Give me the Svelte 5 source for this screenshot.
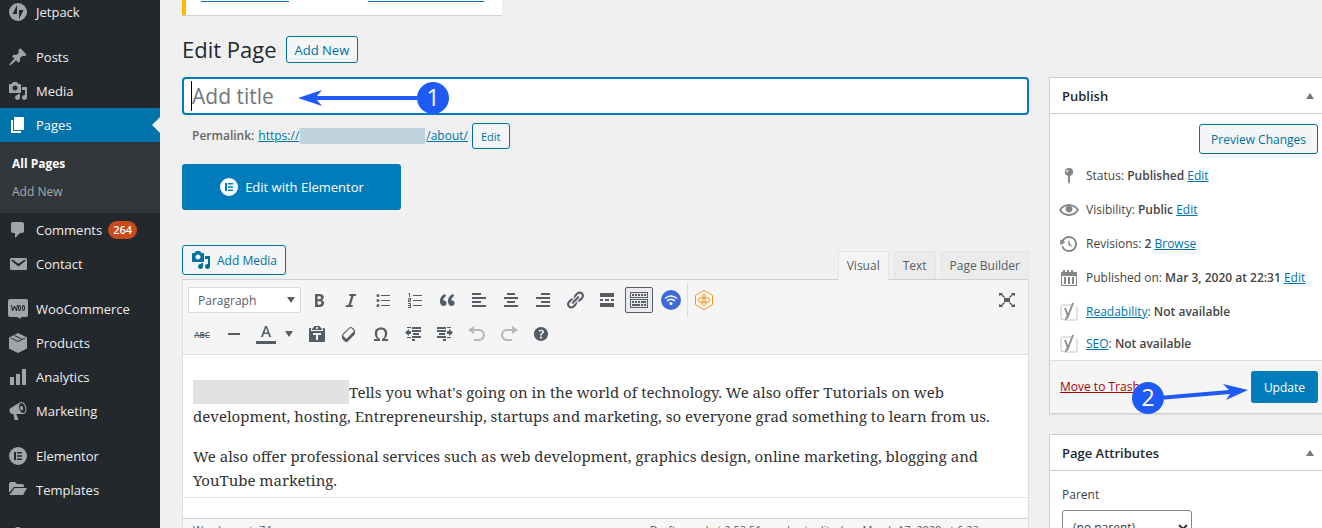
<script>
    let title = '';
    let format = 'Paragraph';
    let parentPage = '(no parent)';

    const icons = {
        jetpack: 'M10 1a9 9 0 1 0 0 18 9 9 0 0 0 0-18zM9 12H4.500L9 3zM11 17V8h4.500z',
        post: 'M10.440 3.020l1.820-1.820 6.360 6.350-1.830 1.820c-1.050-.68-2.480-.57-3.410.36l-.75.75c-.92.93-1.040 2.350-.35 3.410l-1.830 1.820-2.410-2.410-2.800 2.790c-.42.42-3.380 2.710-3.800 2.290s1.860-3.390 2.280-3.810l2.790-2.790L4.100 9.360l1.830-1.820c1.050.69 2.480.57 3.400-.36l.75-.75c.93-.92 1.050-2.350.36-3.410z',
        media: 'M13 11V4c0-.55-.45-1-1-1h-1.670L9 1H5L3.670 3H2c-.55 0-1 .45-1 1v7c0 .55.45 1 1 1h10c.55 0 1-.45 1-1zM7 4.500c1.380 0 2.500 1.120 2.500 2.500S8.380 9.500 7 9.500 4.500 8.380 4.500 7 5.620 4.500 7 4.500zM14 6h5v10.500c0 1.380-1.120 2.500-2.500 2.500S14 17.880 14 16.500s1.120-2.500 2.500-2.500c.17 0 .34.02.5.05V9h-3V6zm-4 8.050V13h2v3.500c0 1.380-1.120 2.500-2.500 2.500S7 17.880 7 16.500 8.120 14 9.500 14c.17 0 .34.02.5.05z',
        page: 'M6 15V2h10v13H6zm-1 1h8v2H3V5h2v11z',
        comment: 'M5 2h9c1.100 0 2 .9 2 2v7c0 1.100-.9 2-2 2h-2l-5 5v-5H5c-1.100 0-2-.9-2-2V4c0-1.100.9-2 2-2z',
        mail: 'M3.870 4h13.250C18.370 4 19 4.590 19 5.790v8.420c0 1.190-.63 1.790-1.880 1.790H3.870c-1.250 0-1.880-.6-1.880-1.790V5.790c0-1.200.63-1.790 1.880-1.790zm6.620 8.600l6.740-5.530c.24-.2.43-.66.13-1.070-.29-.41-.82-.42-1.170-.17l-5.700 3.860L4.800 5.830c-.35-.25-.88-.24-1.170.17-.3.41-.11.87.13 1.070z',
        woo: 'M2 0h16a2 2 0 0 1 2 2v14a2 2 0 0 1-2 2h-5v2l-4-2H2a2 2 0 0 1-2-2V2a2 2 0 0 1 2-2zM3 6l1 6h1l1.500-3.500L8 12h1l1-6H9l-.7 4L7 7H6l-1.300 3L4 6zM11.500 6a1.500 3 0 1 0 0 6 1.500 3 0 0 0 0-6zM11.500 7.300a.6 1.700 0 1 1 0 3.400.6 1.700 0 0 1 0-3.400zM15.500 6a1.500 3 0 1 0 0 6 1.500 3 0 0 0 0-6zM15.500 7.300a.6 1.700 0 1 1 0 3.400.6 1.700 0 0 1 0-3.400z',
        box: 'M10 0l9 4.500v11L10 20l-9-4.500v-11zM2.500 5.200L10 9l7.500-3.800-.8-.5L10 8 3.500 4.700zM6 2.800l7.500 3.700.8-.5L7 2.300z',
        chart: 'M18 18V2h-4v16h4zm-6 0V7H8v11h4zm-6 0v-8H2v8h4z',
        megaphone: 'M18.150 5.940c.46 1.620.38 3.220-.02 4.480-.42 1.280-1.260 2.180-2.300 2.480-.16.06-.26.06-.4.06-.06.02-.12.02-.18.02-.06.02-.14.02-.22.02h-6.800l2.220 5.500c.02.14-.06.26-.14.34-.08.1-.24.16-.34.16H6.950c-.1 0-.26-.06-.34-.16-.08-.08-.16-.2-.14-.34l-1-5.500H4.250l-.02-.02c-.5.06-1.080-.18-1.540-.62s-.88-1.080-1.060-1.880c-.24-.8-.2-1.560-.02-2.200.18-.62.58-1.080 1.060-1.300l.02-.02 9-5.400c.1-.06.18-.1.24-.16.06-.04.14-.08.24-.12.16-.08.28-.12.5-.18 1.040-.3 2.240.1 3.220.98s1.840 2.240 2.260 3.860zm-2.580 5.980h-.02c.4-.1.74-.34 1.040-.7.58-.7.86-1.760.86-3.040 0-.64-.1-1.300-.28-1.980-.34-1.360-1.020-2.500-1.780-3.240s-1.680-1.100-2.460-.88c-.82.22-1.400.96-1.700 2-.32 1.040-.28 2.360.06 3.720.38 1.360 1 2.500 1.800 3.240.78.74 1.620 1.100 2.480.88zm-2.540-7.080c.22-.04.42-.02.62.04.38.16.76.48 1.020 1s.42 1.200.42 1.780c0 .3-.04.56-.12.8-.18.48-.44.84-.86.94-.34.1-.8-.06-1.140-.4s-.64-.86-.78-1.500c-.18-.62-.12-1.240.02-1.720s.48-.84.82-.94z',
        elementor: 'M10 1a9 9 0 1 0 0 18 9 9 0 0 0 0-18zM6 6h2v8H6zM9 6h5v1.600H9zM9 9.200h5v1.600H9zM9 12.400h5V14H9z',
        folder: 'M1 4a2 2 0 0 1 2-2h4l2 2h5a2 2 0 0 1 2 2v1H6L1 13zM6.500 8H19l-4 7H1.500z',
        user: 'M10 2a4 4 0 1 1 0 8 4 4 0 0 1 0-8zM2 18c0-4 3-6 8-6s8 2 8 6z',
        bold: 'M6 4v13h4.540c1.370 0 2.460-.33 3.260-1 .8-.66 1.200-1.580 1.200-2.770 0-.84-.17-1.510-.51-2.010s-.9-.85-1.670-1.030v-.09c.57-.1 1.020-.4 1.360-.9s.51-1.130.51-1.910c0-1.140-.39-1.980-1.170-2.500C12.750 4.260 11.500 4 9.780 4H6zm2.570 5.150V6.260h1.360c.73 0 1.270.11 1.610.32.34.22.51.58.51 1.070 0 .54-.16.92-.47 1.150s-.82.35-1.510.35h-1.500zm0 2.190h1.600c1.440 0 2.160.53 2.160 1.610 0 .6-.17 1.050-.51 1.340s-.86.43-1.570.43H8.570v-3.380z',
        italic: 'M14.780 6h-2.130l-2.800 9h2.120l-.62 2H4.600l.62-2h2.140l2.800-9H8.030l.62-2h6.750z',
        bullets: 'M5 4a1.500 1.500 0 1 1 0 3 1.500 1.500 0 0 1 0-3zM5 9a1.500 1.500 0 1 1 0 3 1.500 1.500 0 0 1 0-3zM5 14a1.500 1.500 0 1 1 0 3 1.500 1.500 0 0 1 0-3zM8 5h9v1H8zM8 10h9v1H8zM8 15h9v1H8z',
        numbers: 'M4 3h1v4H4V4H3zM3 8h3v2.500H4v.7h2v.8H3V9.500h2v-.7H3zM3 13h3v5H3v-1h2v-1H3v-1h2v-1H3zM8 5h9v1H8zM8 10h9v1H8zM8 15h9v1H8z',
        quote: 'M9.490 13.220c0-.74-.2-1.380-.61-1.900-.62-.78-1.830-.88-2.530-.72-.29-1.650 1.110-3.750 2.920-4.650L7.880 4c-2.730 1.300-5.420 4.280-4.960 8.050C3.210 14.430 4.590 16 6.540 16c.85 0 1.560-.25 2.120-.75s.83-1.180.83-2.030zm8.050 0c0-.74-.2-1.380-.61-1.900-.63-.78-1.830-.88-2.530-.72-.29-1.650 1.110-3.750 2.920-4.650L15.930 4c-2.730 1.300-5.410 4.280-4.950 8.050.29 2.380 1.660 3.950 3.610 3.950.85 0 1.560-.25 2.120-.75s.83-1.180.83-2.030z',
        left: 'M3 3h9v2H3zM3 7h14v2H3zM3 11h9v2H3zM3 15h14v2H3z',
        center: 'M6 3h8v2H6zM3 7h14v2H3zM6 11h8v2H6zM3 15h14v2H3z',
        right: 'M8 3h9v2H8zM3 7h14v2H3zM8 11h9v2H8zM3 15h14v2H3z',
        link: 'M17.740 2.760c1.680 1.690 1.680 4.410 0 6.100l-1.530 1.520c-1.120 1.120-2.700 1.470-4.140 1.090l2.620-2.610.76-.77.76-.76c.84-.84.84-2.200 0-3.040-.84-.85-2.200-.85-3.040 0l-.77.76-3.380 3.380c-.37-1.440-.02-3.020 1.100-4.140l1.520-1.530c1.690-1.680 4.420-1.680 6.100 0zM8.590 13.430l5.340-5.340c.42-.42.42-1.100 0-1.520-.44-.43-1.130-.39-1.530 0l-5.330 5.340c-.42.42-.42 1.100 0 1.520.44.43 1.130.39 1.520 0zm-.76 2.290l4.140-4.150c.38 1.440.03 3.020-1.090 4.140l-1.520 1.530c-1.690 1.680-4.410 1.680-6.100 0-1.680-1.680-1.680-4.420 0-6.100l1.530-1.520c1.120-1.120 2.700-1.470 4.140-1.100l-4.140 4.150c-.85.84-.85 2.200 0 3.050.84.84 2.200.84 3.040 0z',
        more: 'M17 7V3H3v4h14zM6 11V9H3v2h3zm6 0V9H8v2h4zm5 0V9h-3v2h3zm0 6v-4H3v4h14z',
        sink: 'M19 2v6H1V2h18zm-1 5V3H2v4h16zM5 4v2H3V4h2zm3 0v2H6V4h2zm3 0v2H9V4h2zm3 0v2h-2V4h2zm3 0v2h-2V4h2zm2 5v9H1V9h18zm-1 8v-7H2v7h16zM5 11v2H3v-2h2zm3 0v2H6v-2h2zm3 0v2H9v-2h2zm6 0v2h-5v-2h5zm-6 3v2H3v-2h8zm3 0v2h-2v-2h2zm3 0v2h-2v-2h2z',
        rule: 'M4 9h12v2H4z',
        color: 'M13.230 13h1.900L11 2H9L5 13h1.880l1.070-3h4.180zm-1.530-4.540H8.510L10 3.600zM0 17h20v3H0z',
        paste: 'M12.380 2L15 5v1H5V5l2.640-3h4.740zM10 5c.55 0 1-.44 1-1 0-.55-.45-1-1-1s-1 .45-1 1c0 .56.45 1 1 1zm5.450-1H17c.55 0 1 .45 1 1v12c0 .56-.45 1-1 1H3c-.55 0-1-.44-1-1V5c0-.55.45-1 1-1h1.550L4 4.630V7h12V4.630zM14 11V9H6v2h3v5h2v-5h3z',
        eraser: 'M14.290 4.590l1.100 1.110c.41.4.61.94.61 1.470v2.120c0 .53-.2 1.070-.61 1.470l-6.630 6.630c-.4.41-.94.61-1.470.61s-1.070-.2-1.470-.61l-1.110-1.100-1.100-1.110c-.41-.4-.61-.94-.61-1.470v-2.120c0-.54.2-1.070.61-1.480l6.630-6.620c.4-.41.94-.61 1.470-.61s1.060.2 1.470.61zm-6.210 9.700l6.420-6.420c.39-.39.39-1.030 0-1.430L12.360 4.300c-.19-.19-.45-.29-.72-.29s-.52.1-.71.29l-6.420 6.420c-.39.4-.39 1.040 0 1.430l2.140 2.140c.38.38 1.040.38 1.430 0z',
        omega: 'M10 5.400c1.270 0 2.240.36 2.910 1.080.66.71 1 1.760 1 3.130 0 1.280-.23 2.370-.69 3.270-.47.89-1.270 1.520-2.220 2.120v2h6v-2h-3.690c.92-.64 1.620-1.340 2.120-2.340.49-1.010.74-2.130.74-3.350 0-1.780-.55-3.190-1.650-4.220S11.920 3.540 10 3.540s-3.430.53-4.520 1.570c-1.100 1.040-1.650 2.440-1.650 4.200 0 1.210.24 2.310.73 3.330.48 1.010 1.190 1.710 2.100 2.360H3v2h6v-2c-.98-.64-1.800-1.280-2.240-2.170-.45-.89-.67-1.960-.67-3.220 0-1.370.33-2.410 1-3.130C7.750 5.760 8.720 5.400 10 5.400z',
        outdent: 'M4 3h4v1H4zM9 3h9v2H9zM9 6h9v2H9zM10 9h6v2h-6zM9 12h9v2H9zM4 13h4v1H4zM9 15h3v2H9zM6 5v2h2v3H6v2L2 8.500z',
        indent: 'M16 3h-4v1h4zM11 3H2v2h9zM11 6H2v2h9zM10 9H4v2h6zM11 12H2v2h9zM16 13h-4v1h4zM11 15H8v2h3zM14 5v2h-2v3h2v2l4-3.500z',
        undo: 'M12 5H7V2L1 6l6 4V7h5c2.200 0 4 1.800 4 4s-1.800 4-4 4H7v2h5c3.300 0 6-2.700 6-6s-2.700-6-6-6z',
        redo: 'M8 5h5V2l6 4-6 4V7H8c-2.200 0-4 1.800-4 4s1.800 4 4 4h5v2H8c-3.300 0-6-2.700-6-6s2.700-6 6-6z',
        help: 'M17 10c0-3.870-3.140-7-7-7-3.870 0-7 3.130-7 7s3.130 7 7 7c3.860 0 7-3.130 7-7zm-6.300 1.480H9.140v-.43c0-.38.08-.7.24-.98s.46-.57.88-.89c.41-.29.68-.53.81-.71.14-.18.2-.39.2-.62 0-.25-.09-.44-.28-.58-.19-.13-.45-.19-.79-.19-.58 0-1.250.19-2 .57l-.64-1.280c.87-.49 1.800-.74 2.770-.74.81 0 1.450.2 1.920.58.48.39.71.91.71 1.550 0 .43-.09.8-.29 1.110-.19.32-.57.67-1.110 1.060-.38.28-.61.49-.71.63-.1.15-.15.34-.15.57v.35zm-1.470 2.740c-.18-.17-.27-.42-.27-.73 0-.33.08-.58.26-.75s.43-.25.77-.25c.32 0 .57.09.75.26s.27.42.27.74c0 .3-.09.55-.27.72-.18.18-.43.27-.75.27-.33 0-.58-.09-.76-.26z',
        full: 'M7 8h6v4H7zM2 3h4L5 4l3 3-1 1-3-3-2 1zM18 3h-4l1 1-3 3 1 1 3-3 2 1zM2 17h4l-1-1 3-3-1-1-3 3-2-1zM18 17h-4l1-1-3-3 1-1 3 3 2-1z',
        pin: 'M10 2a4 4 0 0 1 1 7.900V16l-1 2-1-2V9.900A4 4 0 0 1 10 2zM8.500 4A1.300 1.300 0 0 0 8 6.500l1.500-2z',
        eye: 'M19.700 9.400C17.700 6 14 3.900 10 3.900S2.300 6 .3 9.400L0 10l.3.6c2 3.400 5.700 5.500 9.700 5.500s7.700-2.100 9.700-5.500l.3-.6-.3-.6zM10 14.100c-3.100 0-6-1.600-7.700-4.100C3.600 8 5.700 6.600 8 6.100c-.9.6-1.500 1.700-1.500 2.900 0 1.900 1.600 3.500 3.500 3.500s3.500-1.600 3.500-3.500c0-1.200-.6-2.300-1.500-2.900 2.300.5 4.400 1.900 5.700 3.900-1.700 2.500-4.600 4.100-7.700 4.100z',
        backup: 'M13.650 2.880c3.930 2.010 5.480 6.840 3.470 10.770s-6.830 5.480-10.770 3.470c-1.870-.96-3.200-2.560-3.860-4.400l1.640-1.030c.45 1.570 1.520 2.950 3.080 3.760 3.010 1.540 6.690.35 8.230-2.660 1.550-3.010.36-6.690-2.650-8.240C9.780 3.010 6.100 4.200 4.560 7.210l1.880.97-4.950 3.080-.39-5.820 1.780.91C4.900 2.400 9.750.89 13.650 2.880zm-4.360 7.830C9.110 10.530 9 10.280 9 10c0-.07.03-.12.04-.19h-.01L10 5l.97 4.810L14 13l-4.500-2.120.02-.02c-.08-.04-.16-.09-.23-.15z',
        calendar: 'M2 4h2V2h2v2h2V2h2v2h2V2h2v2h4v14H2zM3 8v9h14V8zM5 9h2v7H5zM9 9h2v7H9zM13 9h2v7h-2z'
    };

    const menu = [
        { name: 'Jetpack', icon: 'jetpack' },
        { sep: true },
        { name: 'Posts', icon: 'post' },
        { name: 'Media', icon: 'media' },
        { name: 'Pages', icon: 'page', sub: ['All Pages', 'Add New'] },
        { name: 'Comments', icon: 'comment', count: 264 },
        { name: 'Contact', icon: 'mail' },
        { sep: true },
        { name: 'WooCommerce', icon: 'woo' },
        { name: 'Products', icon: 'box' },
        { name: 'Analytics', icon: 'chart' },
        { name: 'Marketing', icon: 'megaphone' },
        { sep: true },
        { name: 'Elementor', icon: 'elementor' },
        { name: 'Templates', icon: 'folder' },
        { sep: true },
        { name: '', icon: 'user' }
    ];

    const row1 = ['bold', 'italic', 'bullets', 'numbers', 'quote', 'left', 'center', 'right', 'link', 'more', 'sink'];
    const row2 = ['paste', 'eraser', 'omega', 'outdent', 'indent', 'undo', 'redo', 'help'];

    const details = [
        { icon: 'pin', label: 'Status:', value: 'Published', action: 'Edit' },
        { icon: 'eye', label: 'Visibility:', value: 'Public', action: 'Edit' },
        { icon: 'backup', label: 'Revisions:', value: '2', action: 'Browse' },
        { icon: 'calendar', label: 'Published on:', value: 'Mar 3, 2020 at 22:31', action: 'Edit' }
    ];
</script>

{#snippet icon(name)}
    <svg class="icon" viewBox="0 0 20 20" aria-hidden="true"><path fill-rule="evenodd" d={icons[name]} /></svg>
{/snippet}

<div class="admin">
    <nav class="menu">
        {#each menu as item}
            {#if item.sep}
                <div class="sep"></div>
            {:else}
                <a href="#{item.name}" class="item" class:current={item.sub}>
                    {@render icon(item.icon)}
                    <span>{item.name}</span>
                    {#if item.count}<span class="count">{item.count}</span>{/if}
                </a>
                {#if item.sub}
                    <div class="submenu">
                        {#each item.sub as s, i}
                            <a href="#{s}" class:active={i === 0}>{s}</a>
                        {/each}
                    </div>
                {/if}
            {/if}
        {/each}
    </nav>

    <main>
        <div class="notice"><i></i><i></i></div>
        <header>
            <h1>Edit Page</h1>
            <a class="btn small" href="#new">Add New</a>
        </header>

        <div class="columns">
            <div class="content">
                <div class="title">
                    <input type="text" aria-label="Add title" placeholder="Add title" bind:value={title}>
                    <span class="caret"></span>
                    <svg class="step one" viewBox="0 0 152 34" aria-hidden="true">
                        <path d="M0 17L24 9l-5 6h100v4H19l5 6z" />
                        <circle cx="135" cy="17" r="16" />
                        <text x="135" y="25">1</text>
                    </svg>
                </div>

                <div class="permalink">
                    <strong>Permalink:</strong>
                    <a href="#about">https://<span class="blur"></span>/about/</a>
                    <button class="btn tiny">Edit</button>
                </div>

                <button class="elementor">{@render icon('elementor')} Edit with Elementor</button>

                <div class="tools">
                    <button class="btn media">{@render icon('media')} Add Media</button>
                    <div class="tabs">
                        <button class="on">Visual</button>
                        <button>Text</button>
                        <button>Page Builder</button>
                    </div>
                </div>

                <div class="editor">
                    <div class="toolbar">
                        <div class="row">
                            <div class="format">
                                <select aria-label="Format" bind:value={format}>
                                    <option>Paragraph</option>
                                    <option>Heading 1</option>
                                </select>
                            </div>
                            {#each row1 as b}
                                <button class="tool" class:pressed={b === 'sink'} aria-label={b}>{@render icon(b)}</button>
                            {/each}
                            <button class="tool" aria-label="wifi">
                                <svg class="icon" viewBox="0 0 20 20">
                                    <circle cx="10" cy="10" r="10" fill="#3f68d8" />
                                    <path d="M4 8.500q6-5 12 0M6 11q4-3.500 8 0" fill="none" stroke="#fff" stroke-width="1.500" />
                                    <circle cx="10" cy="13.500" r="1.500" fill="#fff" />
                                </svg>
                            </button>
                            <span class="divider"></span>
                            <button class="tool" aria-label="bee">
                                <svg class="icon" viewBox="0 0 20 20" stroke="#f0932b">
                                    <path d="M10 .5l8.500 5v9l-8.500 5-8.500-5v-9z" fill="#fffaf2" />
                                    <path d="M9.500 8H6a2 2 0 0 0 0 4h2.500zM10.500 8H14a2 2 0 0 1 0 4h-2.500zM8 12.500h4v1.500l-2 2-2-2z" fill="none" />
                                    <circle cx="10" cy="6" r="1.500" fill="none" />
                                </svg>
                            </button>
                            <button class="tool last" aria-label="fullscreen">{@render icon('full')}</button>
                        </div>
                        <div class="row">
                            <button class="tool abc">ABC</button>
                            <button class="tool" aria-label="rule">{@render icon('rule')}</button>
                            <button class="tool" aria-label="text color">{@render icon('color')}</button>
                            <button class="drop" aria-label="colors"></button>
                            {#each row2 as b}
                                <button class="tool" class:off={b === 'undo' || b === 'redo'} aria-label={b}>{@render icon(b)}</button>
                            {/each}
                        </div>
                    </div>
                    <div class="body">
                        <p><span class="hidden"></span>Tells you what's going on in the world of technology. We also offer Tutorials on web development, hosting, Entrepreneurship, startups and marketing, so everyone grad something to learn from us.</p>
                        <p>We also offer professional services such as web development, graphics design, online marketing, blogging and YouTube marketing.</p>
                    </div>
                    <div class="path"></div>
                    <div class="status">
                        <span>Word count: 74</span>
                        <span>Draft saved at 2:53:51 pm. Last edited on March 17, 2020 at 6:23 am</span>
                    </div>
                </div>
            </div>

            <aside>
                <section class="box">
                    <h2>Publish <span></span></h2>
                    <div class="preview"><button class="btn">Preview Changes</button></div>
                    {#each details as d}
                        <div class="detail">
                            {@render icon(d.icon)}
                            <span>{d.label} <b>{d.value}</b> <a href="#edit">{d.action}</a></span>
                        </div>
                    {/each}
                    {#each ['Readability', 'SEO'] as y}
                        <div class="detail yoast">
                            <svg class="icon" viewBox="0 0 20 20" aria-hidden="true">
                                <path d="M12 3H4a2 2 0 0 0-2 2v10a3 3 0 0 0 3 3h13V6a3 3 0 0 0-1-2" fill="#fff" stroke="#c3c4c7" />
                                <path d="M6 6l3 8 5-13M9 13c-1 3-2 4-3 4" fill="none" stroke="#8c8f94" stroke-width="2" />
                            </svg>
                            <span><a href="#{y}">{y}</a>: <b>Not available</b></span>
                        </div>
                    {/each}
                    <footer>
                        <a class="trash" href="#trash">Move to Trash</a>
                        <button class="update">Update</button>
                        <svg class="step two" viewBox="0 0 118 36" aria-hidden="true">
                            <path d="M28 16L98 10l-6-6 25 6-22 10 4-6-71 6z" />
                            <circle cx="17" cy="18" r="16" />
                            <text x="17" y="26">2</text>
                        </svg>
                    </footer>
                </section>

                <section class="box">
                    <h2>Page Attributes <span></span></h2>
                    <div class="attributes">
                        <label for="parent">Parent</label>
                        <select id="parent" bind:value={parentPage}>
                            <option>(no parent)</option>
                        </select>
                    </div>
                </section>
            </aside>
        </div>
    </main>
</div>

<style>
    :global(body) {
        background: #f0f0f0;
    }

    .admin {
        display: flex;
        height: 100vh;
        overflow: hidden;
        background: #f0f0f0;
        color: #3c434a;
        font-family: 'Open Sans', 'Noto Sans', sans-serif;
        font-size: 12px;
        line-height: 20px;
    }

    .admin * {
        box-sizing: border-box;
    }

    a {
        color: #0073aa;
    }

    button, select, input {
        font-family: inherit;
        font-size: inherit;
        margin: 0;
    }

    .icon {
        width: 20px;
        height: 20px;
        flex: none;
        fill: currentColor;
    }

    /* left menu */
    .menu {
        width: 160px;
        flex: none;
        background: #23282d;
        margin-top: -5px;
    }

    .item {
        position: relative;
        display: flex;
        align-items: center;
        height: 34px;
        padding-left: 8px;
        gap: 8px;
        color: #eee;
        font-size: 13px;
        font-weight: 500;
        text-decoration: none;
    }

    .item .icon {
        color: #a0a5aa;
    }

    .current {
        background: #0073aa;
        color: #fff;
    }

    .current .icon {
        color: #fff;
    }

    .current::after {
        content: '';
        position: absolute;
        right: 0;
        top: 9px;
        border: 8px solid transparent;
        border-left: 0;
        border-right-color: #f0f0f0;
    }

    .count {
        background: #ca4a1f;
        color: #fff;
        border-radius: 9px;
        padding: 0 5px;
        font-size: 11px;
        line-height: 18px;
        font-weight: 600;
        margin-left: -2px;
    }

    .sep {
        height: 11px;
    }

    .submenu {
        background: #32373c;
        padding: 8px 12px 7px;
    }

    .submenu a {
        display: block;
        line-height: 28px;
        color: #a5aaaf;
        text-decoration: none;
    }

    .submenu .active {
        color: #fff;
        font-weight: 700;
    }

    /* right part */
    main {
        flex: 1;
        min-width: 0;
        padding-left: 22px;
        margin-right: -7px;
    }

    .notice {
        display: flex;
        gap: 79px;
        width: 320px;
        height: 15px;
        padding-left: 15px;
        background: #fff;
        border-left: 4px solid #ffb900;
        box-shadow: 0 1px 1px #0002;
    }

    .notice i {
        width: 88px;
        height: 2px;
        border-bottom: 1px solid #0073aa;
    }

    .notice i + i {
        width: 116px;
    }

    header {
        display: flex;
        align-items: center;
        gap: 9px;
        padding: 21px 0 14px;
    }

    h1 {
        margin: 0;
        font-size: 22px;
        line-height: 27px;
        font-weight: 400;
        color: #23282d;
    }

    .btn {
        display: inline-flex;
        align-items: center;
        justify-content: center;
        height: 30px;
        padding: 0 11px;
        border: 1px solid #0071a1;
        border-radius: 3px;
        background: #f3f5f6;
        color: #0071a1;
        white-space: nowrap;
    }

    .small {
        height: 27px;
        padding: 0 8px;
        font-size: 13px;
        font-weight: 500;
        text-decoration: none;
    }

    .columns {
        display: flex;
        gap: 20px;
    }

    .content {
        flex: 1;
        min-width: 0;
    }

    .title {
        position: relative;
    }

    .title input {
        display: block;
        width: 100%;
        height: 38px;
        padding: 0 8px;
        border: 2px solid #007cba;
        border-radius: 4px;
        outline: none;
        font-size: 21px;
        color: #32373c;
    }

    .title input::placeholder {
        color: #72777c;
    }

    .caret {
        position: absolute;
        left: 9px;
        top: 4px;
        width: 1px;
        height: 30px;
        background: #000;
    }

    .step {
        position: absolute;
        fill: #1f5af6;
    }

    .step text {
        fill: #fff;
        font-size: 23px;
        text-anchor: middle;
    }

    .one {
        left: 116px;
        top: 4px;
        width: 152px;
        height: 34px;
    }

    .permalink {
        display: flex;
        align-items: center;
        gap: 4px;
        padding: 8px 10px 15px;
        color: #666;
    }

    .permalink strong {
        font-weight: 600;
    }

    .permalink a {
        display: flex;
        align-items: center;
        font-weight: 500;
    }

    .blur {
        width: 125px;
        height: 16px;
        margin: 0 1px;
        background: #bfd2de;
    }

    .tiny {
        height: 26px;
        padding: 0 8px;
        font-size: 11px;
    }

    .elementor {
        display: flex;
        align-items: center;
        justify-content: center;
        gap: 6px;
        width: 219px;
        height: 46px;
        border: 0;
        border-radius: 3px;
        background: #007cba;
        color: #fff;
        font-size: 13px;
        font-weight: 500;
    }

    .tools {
        display: flex;
        justify-content: space-between;
        align-items: flex-start;
        padding-top: 35px;
        height: 69px;
    }

    .media {
        gap: 6px;
        padding: 0 8px;
    }

    .tabs {
        display: flex;
        gap: 5px;
        padding-top: 6px;
    }

    .tabs button {
        position: relative;
        height: 28px;
        padding: 0 8px;
        border: 1px solid #e5e5e5;
        border-bottom: 0;
        background: #ebebeb;
        color: #555d66;
    }

    .tabs .on {
        height: 29px;
        padding-bottom: 1px;
        background: #f5f5f5;
    }

    .editor {
        border: 1px solid #ddd;
        border-top-color: #ccd0d4;
        background: #fff;
    }

    .toolbar {
        padding: 3px 5px 3px 3px;
        background: #f5f5f5;
        border-bottom: 1px solid #ddd;
    }

    .row {
        display: flex;
        align-items: center;
        height: 34px;
    }

    .format {
        position: relative;
        width: 113px;
        margin: 0 2px;
    }

    .format select {
        display: block;
        appearance: none;
        width: 100%;
        height: 26px;
        padding: 0 9px;
        border: 1px solid #ddd;
        border-radius: 0;
        background: #fff;
        color: #555d66;
    }

    .format::after, .drop::after {
        content: '';
        position: absolute;
        right: 6px;
        top: 10px;
        border: 4px solid transparent;
        border-top: 6px solid #555d66;
        border-bottom: 0;
    }

    .drop::after {
        right: 8px;
    }

    .tool {
        display: flex;
        align-items: center;
        justify-content: center;
        width: 28px;
        height: 26px;
        margin: 0 2px;
        padding: 0;
        border: 1px solid transparent;
        border-radius: 2px;
        background: none;
        color: #555d66;
        flex: none;
    }

    .pressed {
        border-color: #555d66;
        background: #ebebeb;
    }

    .last {
        margin-left: auto;
    }

    .off {
        color: #b4b9be;
    }

    .abc {
        font-size: 8px;
        font-weight: 600;
        text-decoration: line-through;
    }

    .drop {
        position: relative;
        width: 19px;
        height: 26px;
        border: 0;
        background: none;
    }

    .divider {
        height: 34px;
        border-left: 1px solid #ddd;
    }

    .body {
        padding: 25px 10px 5px;
        border-bottom: 1px solid #e5e5e5;
        color: #333;
        font-family: 'Noto Serif', Georgia, 'Liberation Serif', serif;
        font-size: 15px;
        line-height: 24px;
    }

    .body p {
        margin: 0 0 16px;
    }

    .body p:last-child {
        margin: 0;
    }

    .hidden {
        display: inline-block;
        width: 156px;
        height: 24px;
        background: #e2e2e2;
        vertical-align: top;
    }

    .path {
        height: 20px;
    }

    .status {
        display: flex;
        justify-content: space-between;
        padding: 1px 30px 1px 10px;
        border-top: 1px solid #ccd0d4;
        background: #f7f7f7;
        color: #555d66;
        font-size: 11px;
    }

    /* meta boxes */
    aside {
        width: 280px;
        flex: none;
    }

    .box {
        margin-bottom: 20px;
        border: 1px solid #ccd0d4;
        background: #fff;
        box-shadow: 0 1px 1px #0001;
    }

    h2 {
        display: flex;
        align-items: center;
        justify-content: space-between;
        margin: 0;
        height: 36px;
        padding: 0 14px 0 12px;
        border-bottom: 1px solid #ccd0d4;
        font-size: 13px;
        font-weight: 600;
        color: #23282d;
    }

    h2 span {
        border: 4px solid transparent;
        border-bottom: 6px solid #72777c;
        border-top: 0;
    }

    .preview {
        display: flex;
        justify-content: flex-end;
        padding: 10px 10px 5px;
    }

    .detail {
        display: flex;
        align-items: center;
        gap: 7px;
        height: 34px;
        padding-left: 9px;
        color: #444;
        white-space: nowrap;
    }

    .detail .icon {
        color: #82878c;
    }

    .detail b {
        font-weight: 600;
    }

    .yoast + .yoast {
        height: 31px;
        padding-bottom: 2px;
    }

    footer {
        position: relative;
        display: flex;
        align-items: center;
        justify-content: space-between;
        padding: 10px;
        border-top: 1px solid #ddd;
        background: #f5f5f5;
    }

    .trash {
        color: #a00;
    }

    .update {
        height: 32px;
        padding: 0 13px;
        border: 0;
        border-radius: 3px;
        background: #007cba;
        color: #fff;
        font-weight: 500;
    }

    .two {
        left: 81px;
        top: 19px;
        width: 118px;
        height: 36px;
    }

    .attributes {
        padding: 14px 12px;
    }

    label {
        display: block;
        margin-bottom: 5px;
        font-weight: 500;
    }

    .attributes select {
        width: 130px;
        height: 34px;
        padding: 0 6px;
        border: 1px solid #7e8993;
        border-radius: 3px;
        background: #fff;
        color: #32373c;
    }
</style>
